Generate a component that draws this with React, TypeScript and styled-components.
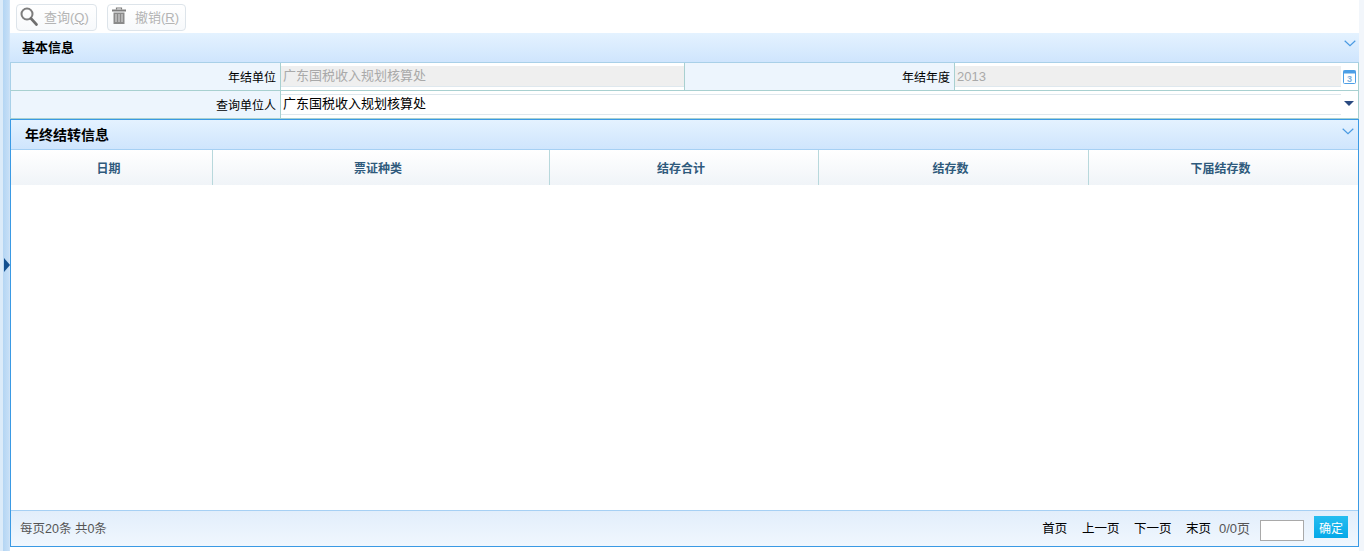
import React from 'react';
import styled, { createGlobalStyle } from 'styled-components';

const GlobalStyle = createGlobalStyle`
  html, body {
    margin: 0;
    padding: 0;
    height: 100%;
    overflow: hidden;
    background: #fff;
    font-family: "Liberation Sans", "Noto Sans CJK SC", sans-serif;
    font-size: 12px;
  }
  #root { height: 100%; }
`;

const Page = styled.div`
  display: flex;
  width: 1364px;
  height: 551px;
`;

// collapsed side menu rail
const Rail = styled.div`
  flex: 0 0 10px;
  box-sizing: border-box;
  position: relative;
  border-left: 3px solid #dcebf9;
  border-right: 1px solid #cfe3f7;
  background: linear-gradient(to right, #b4d5f3, #c6dff7);
`;

const RailHandle = styled.div`
  position: absolute;
  left: 1px;
  top: 258px;
  width: 0;
  height: 0;
  border-top: 7px solid transparent;
  border-bottom: 7px solid transparent;
  border-left: 6px solid #14508f;
`;

const Content = styled.div`
  flex: 0 0 1349px;
  display: flex;
  flex-direction: column;
  min-width: 0;
`;

const RightGutter = styled.div`
  flex: 0 0 5px;
  background: #f2f6fb;
`;

const Toolbar = styled.div`
  height: 33px;
  box-sizing: border-box;
  display: flex;
  align-items: flex-start;
  gap: 10px;
  padding: 4px 0 0 6px;
`;

const ToolButton = styled.div<{ $width: number; $gap: number }>`
  width: ${({ $width }) => $width}px;
  height: 27px;
  box-sizing: border-box;
  display: flex;
  align-items: center;
  gap: ${({ $gap }) => $gap}px;
  padding: 0 0 3px 3px;
  border: 1px solid #dde4ea;
  border-radius: 4px;
  background: linear-gradient(to bottom, #ffffff, #f7f9fb);
  color: #b4b4b4;
  font-size: 13px;
`;

const Hotkey = styled.span`
  text-decoration: underline;
`;

const SectionHeader = styled.div<{ $indent: number; $fontSize: number; $lift: number; $right: number }>`
  height: 29px;
  box-sizing: border-box;
  flex: none;
  display: flex;
  align-items: center;
  justify-content: space-between;
  padding: 0 ${({ $right }) => $right}px ${({ $lift }) => $lift}px ${({ $indent }) => $indent}px;
  background: linear-gradient(to bottom, #e4f2ff, #cfe5fd);
  color: #000;
  font-size: ${({ $fontSize }) => $fontSize}px;
  font-weight: bold;

  svg {
    margin-bottom: 6px;
  }
`;

const FormTable = styled.div`
  height: 57px;
  flex: none;
  box-sizing: border-box;
  display: grid;
  grid-template-columns: 271px 404px 270px 1fr;
  grid-template-rows: 28px 28px;
  border-top: 1px solid #a9d0e8;
`;

const Label = styled.div<{ $first?: boolean }>`
  box-sizing: border-box;
  display: flex;
  align-items: center;
  justify-content: flex-end;
  padding: 0 4px 0 0;
  background: #edf5fd;
  color: #000;
  font-size: 12px;
  border-right: 1px solid #a8d0d0;
  border-bottom: 1px solid #a8d0d0;
  ${({ $first }) => ($first ? 'border-left: 1px solid #a8d0e8;' : '')}
`;

const FieldCell = styled.div<{ $wide?: boolean; $last?: boolean }>`
  box-sizing: border-box;
  display: flex;
  align-items: center;
  position: relative;
  border-bottom: 1px solid #a8d0d0;
  border-right: 1px solid #a8d0d0;
  ${({ $wide }) => ($wide ? 'grid-column: 2 / 5;' : '')}
  padding-right: ${({ $last }) => ($last ? '17px' : '0')};
`;

const ReadonlyValue = styled.div<{ $numeric?: boolean }>`
  width: 100%;
  height: 21px;
  line-height: ${({ $numeric }) => ($numeric ? '22px' : '20px')};
  box-sizing: border-box;
  padding-left: 2px;
  background: #efefef;
  border-bottom: 1px solid #dfe8ee;
  color: #a9a9a9;
  font-size: 13px;
`;

const SelectValue = styled.div`
  width: 100%;
  height: 21px;
  line-height: 18px;
  box-sizing: border-box;
  padding-left: 2px;
  border-top: 1px solid #dfe8ee;
  border-bottom: 1px solid #dfe8ee;
  background: #fff;
  color: #000;
  font-size: 13px;
`;

const CellIcon = styled.span`
  position: absolute;
  right: 2px;
  top: 7px;
  display: flex;
`;

const DropArrow = styled.span`
  position: absolute;
  right: 4px;
  top: 10px;
  width: 0;
  height: 0;
  border-left: 5px solid transparent;
  border-right: 5px solid transparent;
  border-top: 5px solid #2a4a80;
`;

const GridPanel = styled.div`
  flex: 0 0 428px;
  box-sizing: border-box;
  display: flex;
  flex-direction: column;
  border: 1px solid #3a9ae4;
`;

const HeaderRow = styled.div`
  flex: 0 0 36px;
  box-sizing: border-box;
  display: grid;
  grid-template-columns: 202px 337px 269px 270px 1fr;
  border-top: 1px solid #a6d0f4;
  background: linear-gradient(to bottom, #ffffff, #f0f4f8);
`;

const HeaderCell = styled.div<{ $last?: boolean }>`
  display: flex;
  align-items: center;
  justify-content: center;
  box-sizing: border-box;
  padding-right: 6px;
  color: #2f5a7c;
  font-size: 12px;
  font-weight: bold;
  ${({ $last }) => ($last ? '' : 'border-right: 1px solid #b8d8dc;')}
`;

const GridBody = styled.div`
  flex: 1;
  background: #fff;
`;

const Pager = styled.div`
  flex: 0 0 36px;
  box-sizing: border-box;
  display: flex;
  align-items: center;
  justify-content: space-between;
  padding: 0 10px 0 9px;
  border-top: 1px solid #a6d0f4;
  background: linear-gradient(to bottom, #e2eefb, #f0f7fe);
`;

const PagerSummary = styled.div`
  color: #555;
  font-size: 12.5px;
  margin-bottom: 2px;
`;

const PagerControls = styled.div`
  display: flex;
  align-items: center;
  font-size: 12.5px;
`;

const PagerLink = styled.span`
  color: #000;
  margin: 0 14.5px 2px 0;
`;

const PageCount = styled.span`
  color: #555;
  font-size: 13px;
  margin: 0 10px 2px -6.5px;
`;

const PageInput = styled.div`
  width: 44px;
  height: 21px;
  margin-top: 3px;
  box-sizing: border-box;
  border: 1px solid #a9a9a9;
  background: #fff;
`;

const ConfirmButton = styled.div`
  width: 34px;
  height: 22px;
  margin: 0 0 3px 10px;
  display: flex;
  align-items: center;
  justify-content: center;
  background: linear-gradient(to bottom, #25bdf0, #05a8e8);
  color: #fff;
  font-size: 12px;
`;

const SearchIcon = () => (
  <svg width="18" height="19" viewBox="0 0 18 19" fill="none">
    <circle cx="7" cy="7" r="5.5" stroke="#7d7d7d" strokeWidth="2" />
    <path d="M11 11.5L16.5 17.5" stroke="#6e6e6e" strokeWidth="2.6" strokeLinecap="round" />
  </svg>
);

const TrashIcon = () => (
  <svg width="16" height="18" viewBox="0 0 16 18" fill="none">
    <path d="M5.5 2.5V1h5v1.5" stroke="#7d7d7d" strokeWidth="1.2" />
    <rect x="1" y="2.5" width="14" height="2" fill="#7d7d7d" />
    <path d="M2.5 5.5h11V17h-11z" fill="#8a8a8a" />
    <path d="M5 7v8M8 7v8M11 7v8" stroke="#d8d8d8" strokeWidth="1.1" />
  </svg>
);

const ChevronIcon = () => (
  <svg width="12" height="7" viewBox="0 0 12 7" fill="none">
    <path d="M0.7 0.7L6 5.6L11.3 0.7" stroke="#4a9ae2" strokeWidth="1.2" />
  </svg>
);

const CalendarIcon = () => (
  <svg width="13" height="14" viewBox="0 0 13 14">
    <rect x="0.5" y="0.5" width="12" height="13" rx="1" fill="#fff" stroke="#4d9fe6" />
    <rect x="0.5" y="0.5" width="12" height="3" fill="#4d9fe6" />
    <text x="6.5" y="11.5" fontSize="9" fontFamily="Liberation Sans" fontWeight="bold" fill="#7aaedc" textAnchor="middle">3</text>
  </svg>
);

const columns = ['日期', '票证种类', '结存合计', '结存数', '下届结存数'];

const App: React.FC = () => (
  <Page>
    <GlobalStyle />
    <Rail>
      <RailHandle />
    </Rail>
    <Content>
      <Toolbar>
        <ToolButton $width={81} $gap={6}>
          <SearchIcon />
          <span>查询(<Hotkey>Q</Hotkey>)</span>
        </ToolButton>
        <ToolButton $width={79} $gap={8}>
          <TrashIcon />
          <span>撤销(<Hotkey>R</Hotkey>)</span>
        </ToolButton>
      </Toolbar>
      <SectionHeader $indent={12} $fontSize={13} $lift={3} $right={3}>
        基本信息
        <ChevronIcon />
      </SectionHeader>
      <FormTable>
        <Label $first>年结单位</Label>
        <FieldCell>
          <ReadonlyValue>广东国税收入规划核算处</ReadonlyValue>
        </FieldCell>
        <Label>年结年度</Label>
        <FieldCell $last>
          <ReadonlyValue $numeric>2013</ReadonlyValue>
          <CellIcon>
            <CalendarIcon />
          </CellIcon>
        </FieldCell>
        <Label $first>查询单位人</Label>
        <FieldCell $wide $last>
          <SelectValue>广东国税收入规划核算处</SelectValue>
          <DropArrow />
        </FieldCell>
      </FormTable>
      <GridPanel>
        <SectionHeader $indent={14} $fontSize={14} $lift={1} $right={4}>
          年终结转信息
          <ChevronIcon />
        </SectionHeader>
        <HeaderRow>
          {columns.map((title, i) => (
            <HeaderCell key={title} $last={i === columns.length - 1}>
              {title}
            </HeaderCell>
          ))}
        </HeaderRow>
        <GridBody />
        <Pager>
          <PagerSummary>每页20条 共0条</PagerSummary>
          <PagerControls>
            <PagerLink>首页</PagerLink>
            <PagerLink>上一页</PagerLink>
            <PagerLink>下一页</PagerLink>
            <PagerLink>末页</PagerLink>
            <PageCount>0/0页</PageCount>
            <PageInput />
            <ConfirmButton>确定</ConfirmButton>
          </PagerControls>
        </Pager>
      </GridPanel>
    </Content>
    <RightGutter />
  </Page>
);

export default App;
